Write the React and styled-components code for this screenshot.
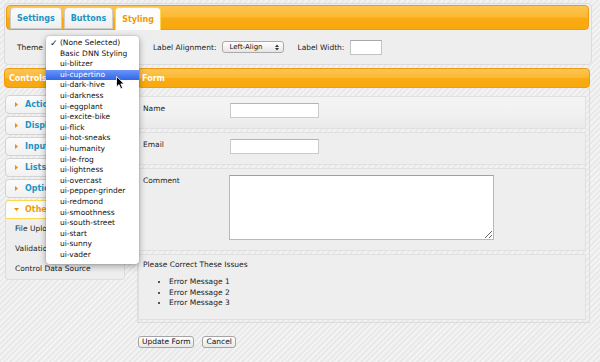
import styled, { createGlobalStyle, css } from 'styled-components';

const GlobalStyle = createGlobalStyle`
  html, body {
    margin: 0;
    height: 100%;
  }
  body {
    background: repeating-linear-gradient(135deg, #f3f3f3 0px, #f3f3f3 2px, #e9e9e9 2px, #e9e9e9 4px);
    font-family: "DejaVu Sans", Verdana, sans-serif;
    font-size: 7.5px;
    color: #222;
    overflow: hidden;
  }
  * { box-sizing: border-box; }
`;

const gloss = css`
  background: linear-gradient(to bottom, #fcc452 0%, #fbb935 48%, #f9ab12 52%, #f8a90f 100%);
  border: 1px solid #ec9b12;
`;

const Page = styled.div`
  padding: 3px 0 0 4px;
`;

const TabsPanel = styled.div`
  width: 588px;
  padding: 1px 2px 1px 1px;
  border: 1px solid #dcdcdc;
  border-radius: 4px;
  background: #eeeeee;
`;

const TabBar = styled.div`
  ${gloss};
  height: 25px;
  border-radius: 4px;
  padding: 2px 0 0 3px;
  display: flex;
  align-items: flex-end;
  gap: 2px;
`;

const Tab = styled.div`
  height: ${p => (p.$active ? 23 : 22)}px;
  margin-bottom: ${p => (p.$active ? -1 : 0)}px;
  padding: 0 6px;
  display: flex;
  align-items: center;
  border: 1px solid ${p => (p.$active ? '#fbd850' : '#cccccc')};
  border-bottom: ${p => (p.$active ? 'none' : '1px solid #cccccc')};
  border-radius: 4px 4px 0 0;
  background: ${p => (p.$active ? '#fdfdfd' : 'linear-gradient(#fbfbfb, #efefef)')};
  color: ${p => (p.$active ? '#f29b00' : '#1c94c4')};
  font-weight: bold;
  font-size: 8px;
`;

const SettingsRow = styled.div`
  height: 33px;
  padding: 1px 0 0 11px;
  display: flex;
  align-items: center;
`;

const FieldLabel = styled.span`
  margin-left: ${p => p.$gap || 0}px;
  color: #222;
`;

const ThemeSlot = styled.div`
  position: relative;
  width: 94px;
  height: 12px;
  margin-left: 3px;
  margin-right: 13px;
`;

const ThemeMenu = styled.ul`
  position: absolute;
  left: 0;
  top: -5px;
  width: 93px;
  margin: 0;
  padding: 2px 0 4px;
  list-style: none;
  background: #fff;
  border-radius: 4px;
  box-shadow: 0 2px 7px rgba(0, 0, 0, 0.35), 0 0 0 1px rgba(0, 0, 0, 0.06);
  z-index: 10;
`;

const MenuItem = styled.li`
  position: relative;
  height: 10.6px;
  line-height: 10.6px;
  padding-left: 14px;
  color: ${p => (p.$hover ? '#fff' : '#111')};
  background: ${p => (p.$hover ? 'linear-gradient(#6b95f7, #2f66ea)' : 'transparent')};
  white-space: nowrap;
`;

const Check = styled.span`
  position: absolute;
  left: 4px;
  top: 0;
  font-size: 9px;
  font-weight: bold;
`;

const Pointer = styled.svg`
  position: absolute;
  left: 70px;
  top: 40px;
  z-index: 11;
`;

const SelectBox = styled.div`
  width: 62px;
  height: 12px;
  margin-left: 6px;
  padding: 0 4px 0 6px;
  display: flex;
  align-items: center;
  justify-content: space-between;
  border: 1px solid #a9a9a9;
  border-radius: 3px;
  background: linear-gradient(#ffffff, #e6e6e6);
  font-size: 7px;
  color: #111;
`;

const WidthInput = styled.div`
  width: 32px;
  height: 15px;
  margin-left: 6px;
  background: #fff;
  border: 1px solid #c4c4c4;
  border-top-color: #a8a8a8;
`;

const Columns = styled.div`
  display: flex;
  gap: 12px;
  margin-top: 3px;
`;

const Sidebar = styled.div`
  width: 121px;
  flex-shrink: 0;
`;

const Header = styled.div`
  ${gloss};
  height: 20px;
  border-radius: 4px;
  padding-left: 4px;
  display: flex;
  align-items: center;
  color: #fff;
  font-weight: bold;
  font-size: 8px;
`;

const Accordion = styled.div`
  padding: 7px 0 0 1px;
`;

const AccordionHead = styled.div`
  height: 19px;
  margin-bottom: ${p => (p.$open ? 0 : 2)}px;
  padding-left: 8px;
  display: flex;
  align-items: center;
  gap: 6px;
  border: 1px solid ${p => (p.$open ? '#fbd850' : '#d3d3d3')};
  border-radius: ${p => (p.$open ? '4px 4px 0 0' : '4px')};
  background: ${p => (p.$open ? '#fdfdfd' : 'linear-gradient(#fbfbfb, #f1f1f1)')};
  color: ${p => (p.$open ? '#f29b00' : '#1c94c4')};
  font-weight: bold;
  font-size: 8px;
`;

const AccordionBody = styled.div`
  padding-left: 9px;
  border: 1px solid #dddddd;
  border-top: none;
  border-radius: 0 0 4px 4px;
  background: #eeeeee;
`;

const BodyItem = styled.div`
  height: 20px;
  line-height: 20px;
  color: #222;
`;

const FormColumn = styled.div`
  width: 453px;
`;

const FormBody = styled.div`
  padding: 8px 3px 2px 0;
  border: 1px solid #dcdcdc;
  border-top: none;
  box-shadow: inset 2px 0 2px -1px rgba(0, 0, 0, 0.08);
`;

const FormRow = styled.div`
  display: ${p => (p.$stack ? 'block' : 'flex')};
  align-items: flex-start;
  margin-bottom: ${p => (p.$last ? 0 : 3)}px;
  padding: ${p => (p.$stack ? '5px 4px 10px' : '6px 4px 10px')};
  border: 1px solid #e0e0e0;
  background: ${p => (p.$first ? 'linear-gradient(#f4f4f4, #f1f1f1 60%, #e9e9e9)' : '#eeeeee')};
`;

const RowLabel = styled.div`
  width: 87px;
  padding-top: 1px;
  line-height: 10px;
  color: #222;
`;

const TextInput = styled.div`
  width: 89px;
  height: 15px;
  background: #fff;
  border: 1px solid #cbcbcb;
  border-top-color: #b4b4b4;
`;

const TextArea = styled.textarea`
  width: 265px;
  height: 65px;
  margin: 0 0 0 -1px;
  padding: 0;
  background: #fff;
  border: 1px solid #b9b9b9;
  border-top-color: #a0a0a0;
  resize: both;
  outline: none;
`;

const IssueTitle = styled.div`
  line-height: 10px;
  color: #222;
`;

const IssueList = styled.ul`
  margin: 7px 0 0;
  padding-left: 26px;
  line-height: 10.5px;
  color: #222;
`;

const ButtonBar = styled.div`
  display: flex;
  gap: 8px;
  margin: 13px 0 0 134px;
`;

const Button = styled.div`
  height: 12px;
  padding: 0 3px;
  display: flex;
  align-items: center;
  border: 1px solid #a5a5a5;
  border-radius: 3px;
  background: linear-gradient(#ffffff, #e8e8e8);
  font-size: 7.5px;
  color: #111;
`;

const themes = [
  '(None Selected)', 'Basic DNN Styling', 'ui-blitzer', 'ui-cupertino', 'ui-dark-hive',
  'ui-darkness', 'ui-eggplant', 'ui-excite-bike', 'ui-flick', 'ui-hot-sneaks',
  'ui-humanity', 'ui-le-frog', 'ui-lightness', 'ui-overcast', 'ui-pepper-grinder',
  'ui-redmond', 'ui-smoothness', 'ui-south-street', 'ui-start', 'ui-sunny', 'ui-vader',
];

const groups = ['Actions', 'Display', 'Inputs', 'Lists', 'Options', 'Other'];

const Caret = ({ open }) => (
  <svg width="5" height="5" viewBox="0 0 5 5">
    {open
      ? <path d="M0 1 L5 1 L2.5 4 Z" fill="#ef8c08" />
      : <path d="M1 0 L4 2.5 L1 5 Z" fill="#ef8c08" />}
  </svg>
);

const UpDown = () => (
  <svg width="4" height="7" viewBox="0 0 4 7">
    <path d="M0 3 L2 0.5 L4 3 Z" fill="#333" />
    <path d="M0 4 L4 4 L2 6.5 Z" fill="#333" />
  </svg>
);

const App = () => {
  return (
    <Page>
      <GlobalStyle />
      <TabsPanel>
        <TabBar>
          <Tab>Settings</Tab>
          <Tab>Buttons</Tab>
          <Tab $active>Styling</Tab>
        </TabBar>
        <SettingsRow>
          <FieldLabel>Theme</FieldLabel>
          <ThemeSlot>
            <ThemeMenu>
              {themes.map((t, i) => (
                <MenuItem key={t} $hover={t === 'ui-cupertino'}>
                  {i === 0 && <Check>✓</Check>}
                  {t}
                </MenuItem>
              ))}
              <Pointer width="9" height="14" viewBox="0 0 9 14">
                <path d="M0.5 0.5 L0.5 11 L3 8.6 L4.8 12.8 L6.6 12 L4.8 7.9 L8.2 7.9 Z" fill="#000" stroke="#fff" strokeWidth="0.8" />
              </Pointer>
            </ThemeMenu>
          </ThemeSlot>
          <FieldLabel>Label Alignment:</FieldLabel>
          <SelectBox>Left-Align<UpDown /></SelectBox>
          <FieldLabel $gap={13}>Label Width:</FieldLabel>
          <WidthInput />
        </SettingsRow>
      </TabsPanel>

      <Columns>
        <Sidebar>
          <Header>Controls</Header>
          <Accordion>
            {groups.map(g => (
              <AccordionHead key={g} $open={g === 'Other'}>
                <Caret open={g === 'Other'} />
                {g}
              </AccordionHead>
            ))}
            <AccordionBody>
              <BodyItem>File Upload</BodyItem>
              <BodyItem>Validation</BodyItem>
              <BodyItem>Control Data Source</BodyItem>
            </AccordionBody>
          </Accordion>
        </Sidebar>

        <FormColumn>
          <Header>Form</Header>
          <FormBody>
            <FormRow $first>
              <RowLabel>Name</RowLabel>
              <TextInput />
            </FormRow>
            <FormRow>
              <RowLabel>Email</RowLabel>
              <TextInput />
            </FormRow>
            <FormRow>
              <RowLabel>Comment</RowLabel>
              <TextArea />
            </FormRow>
            <FormRow $stack $last>
              <IssueTitle>Please Correct These Issues</IssueTitle>
              <IssueList>
                <li>Error Message 1</li>
                <li>Error Message 2</li>
                <li>Error Message 3</li>
              </IssueList>
            </FormRow>
          </FormBody>
        </FormColumn>
      </Columns>

      <ButtonBar>
        <Button>Update Form</Button>
        <Button>Cancel</Button>
      </ButtonBar>
    </Page>
  );
};

export default App;
